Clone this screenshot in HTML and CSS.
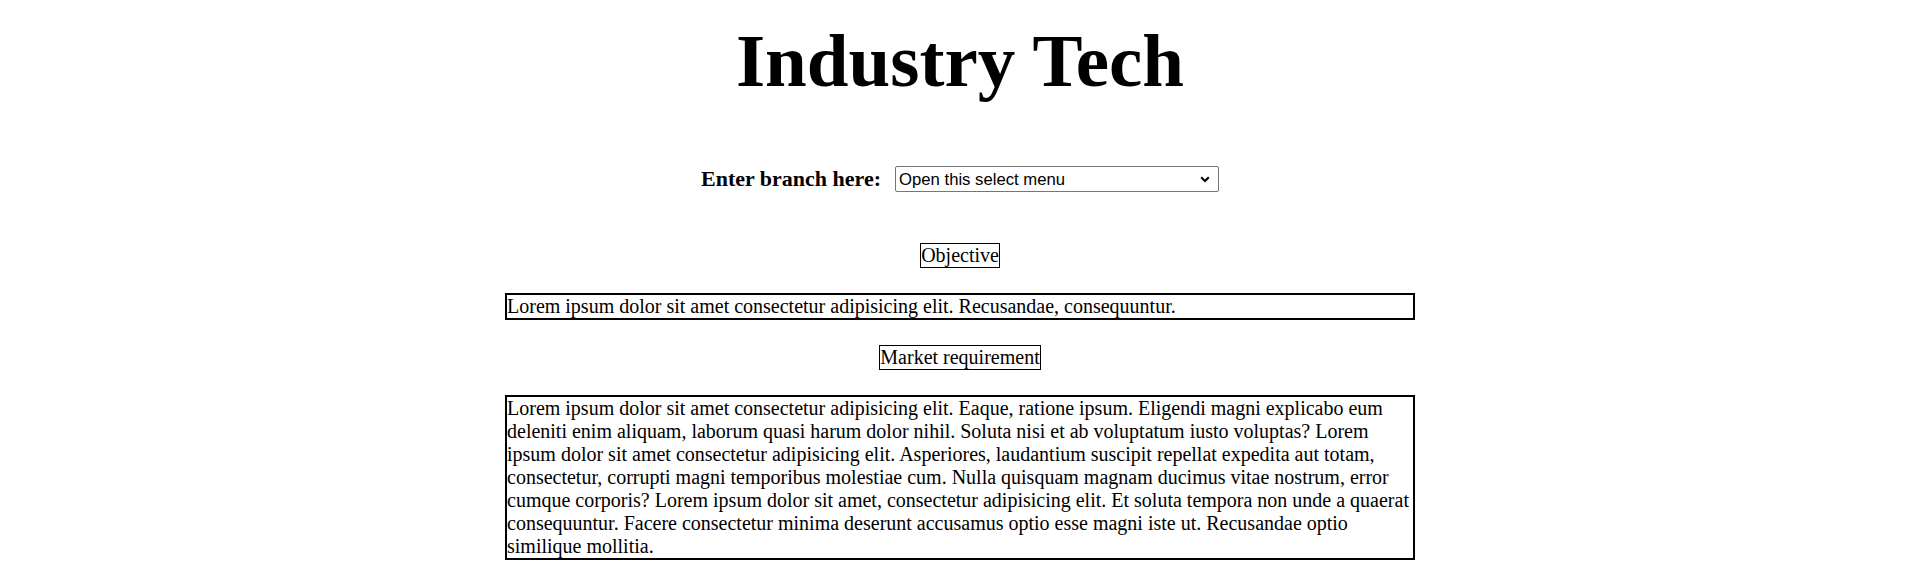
FILE: index.html
```html
<!DOCTYPE html>
<html>
<head>
<meta charset="utf-8">
<title>Industry Tech</title>
<link rel="stylesheet" href="styles.css">
</head>
<body>
<h1 class="title">Industry Tech</h1>
<div class="branch-row">
  <label class="branch-label" for="branch">Enter branch here:</label>
  <div class="select-wrap">
    <select id="branch" class="branch-select">
      <option>Open this select menu</option>
    </select>
    <svg class="select-arrow" width="10" height="7" viewBox="0 0 10 7" aria-hidden="true">
      <path d="M1.2 1.2 L5 5 L8.8 1.2" fill="none" stroke="#000" stroke-width="2.1"/>
    </svg>
  </div>
</div>
<div class="sections">
  <div class="heading-box">Objective</div>
  <div class="text-box">Lorem ipsum dolor sit amet consectetur adipisicing elit. Recusandae, consequuntur.</div>
  <div class="heading-box">Market requirement</div>
  <div class="text-box">Lorem ipsum dolor sit amet consectetur adipisicing elit. Eaque, ratione ipsum. Eligendi magni explicabo eum deleniti enim aliquam, laborum quasi harum dolor nihil. Soluta nisi et ab voluptatum iusto voluptas? Lorem ipsum dolor sit amet consectetur adipisicing elit. Asperiores, laudantium suscipit repellat expedita aut totam, consectetur, corrupti magni temporibus molestiae cum. Nulla quisquam magnam ducimus vitae nostrum, error cumque corporis? Lorem ipsum dolor sit amet, consectetur adipisicing elit. Et soluta tempora non unde a quaerat consequuntur. Facere consectetur minima deserunt accusamus optio esse magni iste ut. Recusandae optio similique mollitia.</div>
</div>
</body>
</html>
```

FILE: styles.css
```css
html, body {
  margin: 0;
  padding: 0;
  background: #fff;
  color: #000;
  font-family: "Liberation Serif", "Times New Roman", serif;
}

.title {
  margin: 18px 0 0;
  text-align: center;
  font-size: 75px;
  font-weight: bold;
  line-height: normal;
}

.branch-row {
  display: flex;
  justify-content: center;
  align-items: center;
  gap: 14px;
  margin-top: 62px;
}

.branch-label {
  font-size: 22px;
  font-weight: bold;
}

.select-wrap {
  position: relative;
  display: flex;
}

.branch-select {
  -webkit-appearance: none;
  appearance: none;
  box-sizing: border-box;
  width: 324px;
  height: 26px;
  font-family: "Liberation Sans", Arial, sans-serif;
  font-size: 16.7px;
  color: #000;
  background: #fff;
  border: 1px solid #767676;
  border-radius: 2px;
  padding: 0 24px 0 3px;
}

.select-arrow {
  position: absolute;
  right: 9px;
  top: 10px;
  pointer-events: none;
}

.sections {
  display: flex;
  flex-direction: column;
  align-items: center;
  gap: 25px;
  margin-top: 51px;
}

.heading-box {
  border: 1px solid #000;
  font-size: 20px;
  line-height: 23px;
}

.text-box {
  box-sizing: border-box;
  width: 910px;
  border: 2px solid #000;
  font-size: 20px;
  line-height: 23px;
}
```
